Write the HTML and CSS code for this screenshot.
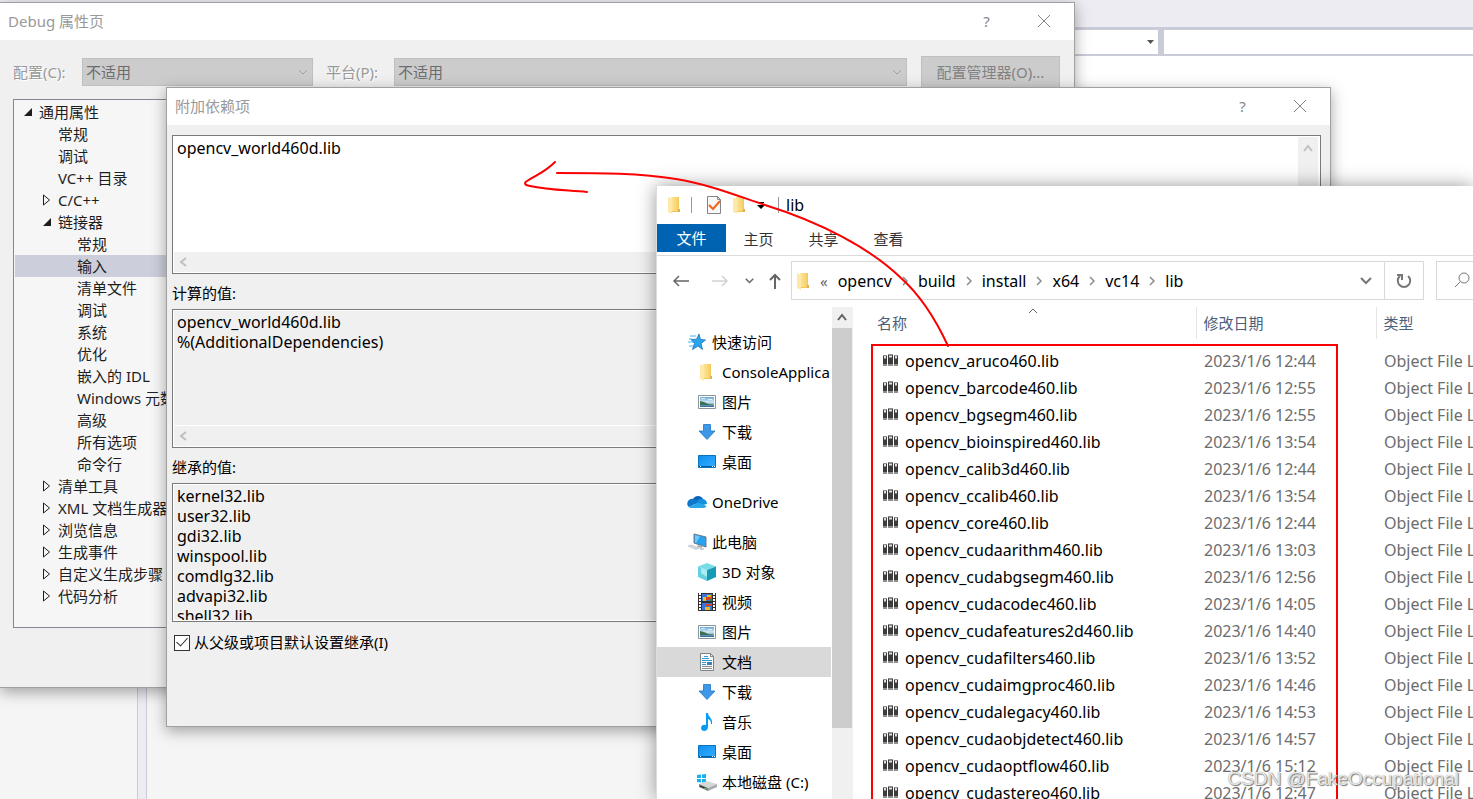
FILE: index.html
```html
<!DOCTYPE html>
<html lang="zh-CN">
<head>
<meta charset="utf-8">
<title>Debug 属性页</title>
<link rel="stylesheet" href="styles.css">
</head>
<body>
<svg class="sprite" aria-hidden="true">
  <defs>
    <linearGradient id="gold" x1="0" x2="1"><stop offset="0" stop-color="#ffe79b"/><stop offset="1" stop-color="#f6cf68"/></linearGradient>
    <linearGradient id="sky" x1="0" y1="0" x2="1" y2="1"><stop offset="0" stop-color="#0c8ff0"/><stop offset="1" stop-color="#35adff"/></linearGradient>
    <linearGradient id="photo" x1="0" y1="0" x2="0" y2="1"><stop offset="0" stop-color="#69a9d8"/><stop offset=".5" stop-color="#d3e8f4"/><stop offset="1" stop-color="#27698f"/></linearGradient>
  </defs>
  <symbol id="i-folder" viewBox="0 0 18 18"><path fill="#f2c75c" d="M5 1h8v12h1v3H5z"/><path fill="url(#gold)" d="M5 1h7v14H5z"/><path fill="#ffe9a9" d="M2 1l4 2v15l-4-2z"/><path fill="#dfb050" d="M12 13h2v3h-2z"/></symbol>
  <symbol id="i-check" viewBox="0 0 18 18"><path fill="#f8f8f8" stroke="#858585" d="M2.500.5h10l3 3v14h-13z"/><path fill="none" stroke="#858585" d="M12.500.5v3h3"/><path fill="none" stroke="#f26419" stroke-width="2" d="M4 9l4 4 7-8"/></symbol>
  <symbol id="i-star" viewBox="0 0 18 18"><path fill="#2ba6ee" stroke="#1271b9" stroke-width=".8" d="M11 1l1.500 5.500 5 .5-4.500 3.500 1.500 6L10 13l-5.500 3.500L6.500 10.500 3 6.500l5.500-.3z"/><path stroke="#49b6f4" d="M2 3h6M1 6h3M0 9h5M1 13h4"/></symbol>
  <symbol id="i-picture" viewBox="0 0 18 18"><path fill="#fff" stroke="#8b949b" d="M.5 2.500h17v13H.5z"/><path fill="url(#photo)" d="M2 4h14v10H2z"/><path fill="#3c7052" d="M2 8l4 1 4 2 6 1H2z"/><path fill="#fff" opacity=".7" d="M3 5h4v1H3zM10 6h4v1h-4z"/></symbol>
  <symbol id="i-down" viewBox="0 0 18 18"><path fill="#3d99e8" stroke="#1f76c4" stroke-width=".8" d="M5.500 1.500h7V8H17l-8 8.500L1 8h4.500z"/></symbol>
  <symbol id="i-desktop" viewBox="0 0 18 18"><path fill="url(#sky)" stroke="#0872bd" d="M.5 2.500h17v12H.5z"/><path fill="#075c9c" d="M1 13h16v1H1z"/><path fill="#fff" d="M2 13h1v1H2zM14 13h1v1h-1zM16 13h1v1h-1z"/></symbol>
  <symbol id="i-cloud" viewBox="0 0 20 18"><path fill="#0a62b8" d="M6 6c2-4 8-4 10 0l-6 5-9-2c1-2 3-3 5-3z"/><path fill="#1490df" d="M15 6c3 0 5 2 5 5l-8 2-6-4c3-1 4-3 9-3z"/><path fill="#0f76cc" d="M4 6c3-1 5 1 8 3L2 14C-1 12 0 7 4 6z"/><path fill="#28a8ea" d="M2 14l9-4.500L19.500 13c-.5 1-1.500 2-3 2H4c-1 0-1.500-.5-2-1z"/></symbol>
  <symbol id="i-pc" viewBox="0 0 20 18"><path fill="#27a3ed" stroke="#6d7880" d="M7 1l12 3v10L7 10z"/><path fill="#75c7fb" d="M8 2l5 1.500L9 10l-1-.5z"/><path fill="#a5adb3" d="M11 12l4 1v2l-5-1z"/><path fill="#d7dade" stroke="#b3b8bd" stroke-width=".6" d="M1 13l3-1 8 3-3 1.500zM13 15l4 1-3 1z"/></symbol>
  <symbol id="i-cube" viewBox="0 0 18 18"><path fill="#78dce7" d="M0 3.500L9 0l9 3.500L9 7z"/><path fill="#66cfe0" d="M0 3.500L9 7v11l-9-4z"/><path fill="#159bb6" d="M18 3.500L9 7v11l9-4z"/><path fill="#a8edf2" d="M3 5L9 7v7l-6-4z"/></symbol>
  <symbol id="i-video" viewBox="0 0 18 18"><path fill="#33302d" d="M0 0h18v18H0z"/><path stroke="#fff" stroke-width="2" stroke-dasharray="2 1" d="M2 0v18M16 0v18"/><path fill="#3976da" d="M4 1h10v7H4zM4 10h10v7H4z"/><path fill="#e8bd23" d="M5 4h3v4H5zM9 2h4v3H9zM7 14h5v3H7z"/><path fill="#d3422f" d="M8 4h5v3H8zM8 11h5v2H8z"/><path fill="#2d8c49" d="M11 6h3v2h-3z"/></symbol>
  <symbol id="i-doc" viewBox="0 0 18 18"><path fill="#fafafa" stroke="#7e8388" d="M2.500.5h10l3 3v14h-13z"/><path fill="none" stroke="#7e8388" d="M12.500.5v3h3"/><path stroke="#329ad9" d="M4 5.500h7M4 7.500h10M6 3.500h4M4 9.500h4M4 11.500h4"/><path fill="#3b82b3" d="M9 9h5v3H9z"/><path stroke="#8b8f92" d="M4 13.500h10M4 15.500h10"/></symbol>
  <symbol id="i-music" viewBox="0 0 18 18"><path fill="#079cf1" d="M8 0h2c0 4 5 5 4 11h-1c0-3-1-4-3-5v8c0 5-7 5-7 1 0-3 3-4 5-3z"/></symbol>
  <symbol id="i-disk" viewBox="0 0 20 18"><path fill="#18b3ee" d="M0 2l4-.5V5H0zM5 1.500L9 1v4H5zM0 6h4v3.500L0 9zM5 6h4v4l-4-.5z"/><path fill="#d5d7d9" d="M2 11l8-3 10 3-9 4z"/><path fill="#777c7e" d="M2 11l9 4v3l-9-4z"/><path fill="#a7abad" d="M20 11l-9 4v3l9-4z"/><path fill="#222" d="M3 12.500l6 2.500v1L3 13.500z"/><path fill="#48cf48" d="M7 15h2v1H7z"/></symbol>
  <symbol id="i-lib" viewBox="0 0 15 13"><path fill="#8f8f8f" d="M0 1h4v11H0zM5 0h5v12H5zM11 1h4v11h-4z"/><path fill="#3c3c3c" d="M0 5h4v5H0zM5 4h5v6H5zM11 5h4v5h-4zM0 2h1v3H0zM3 2h1v3H3zM5 1h1v3H5zM9 1h1v3H9zM11 2h1v3h-1zM14 2h1v3h-1z"/><path fill="#dedede" d="M1 2h2v2H1zM6 2h3v1H6zM12 2h2v2h-2z"/></symbol>
  <symbol id="i-close" viewBox="0 0 12 12"><path fill="none" stroke="#858585" d="M0 0l12 12M12 0L0 12"/></symbol>
  <symbol id="i-left" viewBox="0 0 8 10"><path fill="none" stroke="#bfbfbf" stroke-width="2" d="M7 1L2 5l5 4"/></symbol>
  <symbol id="i-up" viewBox="0 0 10 8"><path fill="none" stroke="currentColor" stroke-width="2" d="M1 7l4-5 4 5"/></symbol>
  <symbol id="i-open" viewBox="0 0 10 10"><path fill="#1e1e1e" d="M9 1v8H1z"/></symbol>
  <symbol id="i-shut" viewBox="0 0 10 12"><path fill="none" stroke="#1e1e1e" d="M1.500 1v10l6-5z"/></symbol>
  <symbol id="i-sep" viewBox="0 0 6 10"><path fill="none" stroke="#8a8a8a" stroke-width="1.500" d="M1 1l4 4-4 4"/></symbol>
  <symbol id="i-chev" viewBox="0 0 12 8"><path fill="none" stroke="currentColor" stroke-width="2" d="M1 1l5 5 5-5"/></symbol>
</svg>

<main class="desktop">
  <section class="ide">
    <div class="ide-top"></div>
    <div class="ide-nav"><div class="ide-field"><svg width="7" height="4" viewBox="0 0 7 4"><path fill="#555" d="M0 0h7L3.500 4z"/></svg></div><div class="ide-field"></div></div>
    <div class="ide-main"><div class="ide-side"></div><div class="ide-split"></div><div class="ide-work"><div class="ide-editor"></div><div class="ide-output"></div></div></div>
  </section>

  <section class="window properties">
    <header class="titlebar"><h1>Debug 属性页</h1><button class="tb">?</button><button class="tb" aria-label="关闭"><svg width="12" height="12"><use href="#i-close"/></svg></button></header>
    <div class="config">
      <label for="cfg">配置(C):</label>
      <div class="combo narrow"><select id="cfg" disabled><option>不适用</option></select><svg width="10" height="6" viewBox="0 0 10 6"><path fill="none" stroke="#a0a0a0" d="M1 1l4 4 4-4"/></svg></div>
      <label class="second" for="plat">平台(P):</label>
      <div class="combo wide"><select id="plat" disabled><option>不适用</option></select><svg width="10" height="6" viewBox="0 0 10 6"><path fill="none" stroke="#a0a0a0" d="M1 1l4 4 4-4"/></svg></div>
      <button class="manager" disabled>配置管理器(O)...</button>
    </div>
    <ul class="tree">
      <li><svg><use href="#i-open"/></svg>通用属性</li>
      <li class="l1 leaf">常规</li>
      <li class="l1 leaf">调试</li>
      <li class="l1 leaf">VC++ 目录</li>
      <li class="l1"><svg><use href="#i-shut"/></svg>C/C++</li>
      <li class="l1"><svg><use href="#i-open"/></svg>链接器</li>
      <li class="l2 leaf">常规</li>
      <li class="l2 leaf selected">输入</li>
      <li class="l2 leaf">清单文件</li>
      <li class="l2 leaf">调试</li>
      <li class="l2 leaf">系统</li>
      <li class="l2 leaf">优化</li>
      <li class="l2 leaf">嵌入的 IDL</li>
      <li class="l2 leaf">Windows 元数</li>
      <li class="l2 leaf">高级</li>
      <li class="l2 leaf">所有选项</li>
      <li class="l2 leaf">命令行</li>
      <li class="l1"><svg><use href="#i-shut"/></svg>清单工具</li>
      <li class="l1"><svg><use href="#i-shut"/></svg>XML 文档生成器</li>
      <li class="l1"><svg><use href="#i-shut"/></svg>浏览信息</li>
      <li class="l1"><svg><use href="#i-shut"/></svg>生成事件</li>
      <li class="l1"><svg><use href="#i-shut"/></svg>自定义生成步骤</li>
      <li class="l1"><svg><use href="#i-shut"/></svg>代码分析</li>
    </ul>
  </section>

  <section class="window depends">
    <header class="titlebar"><h2>附加依赖项</h2><button class="tb">?</button><button class="tb" aria-label="关闭"><svg width="12" height="12"><use href="#i-close"/></svg></button></header>
    <div class="depends-body">
      <div class="box editable">
        <div class="box-row"><textarea aria-label="附加依赖项">opencv_world460d.lib</textarea><div class="vbar"><svg width="10" height="8"><use href="#i-up"/></svg></div></div>
        <div class="hbar"><svg width="8" height="10"><use href="#i-left"/></svg></div>
      </div>
      <label for="calc">计算的值:</label>
      <div class="box">
        <div class="box-row"><textarea id="calc" readonly>opencv_world460d.lib
%(AdditionalDependencies)</textarea></div>
        <div class="hbar"><svg width="8" height="10"><use href="#i-left"/></svg></div>
      </div>
      <label for="inherited">继承的值:</label>
      <div class="box">
        <div class="box-row"><textarea id="inherited" readonly>kernel32.lib
user32.lib
gdi32.lib
winspool.lib
comdlg32.lib
advapi32.lib
shell32.lib</textarea></div>
      </div>
      <label class="inherit"><input type="checkbox" checked>从父级或项目默认设置继承(I)</label>
    </div>
  </section>

  <section class="explorer">
    <header class="quick">
      <svg class="ic"><use href="#i-folder"/></svg><i></i><svg class="ic gap"><use href="#i-check"/></svg><svg class="ic"><use href="#i-folder"/></svg><svg class="drop" width="8" height="7" viewBox="0 0 8 7"><path d="M1 0h6v1H1zM0 3h8L4 7z"/></svg><i></i><span>lib</span>
    </header>
    <nav class="tabs"><button class="active">文件</button><button>主页</button><button>共享</button><button>查看</button></nav>
    <div class="address">
      <button aria-label="后退"><svg width="16" height="12" viewBox="0 0 16 12"><path fill="none" stroke="#666" stroke-width="1.500" d="M16 6H1M6 1L1 6l5 5"/></svg></button>
      <button class="fwd" aria-label="前进"><svg width="16" height="12" viewBox="0 0 16 12"><path fill="none" stroke="#d2d2d2" stroke-width="1.500" d="M0 6h15M10 1l5 5-5 5"/></svg></button>
      <button class="recent" aria-label="最近"><svg width="9" height="6"><use href="#i-chev"/></svg></button>
      <button aria-label="向上"><svg width="12" height="16" viewBox="0 0 12 16"><path fill="none" stroke="#666" stroke-width="2" d="M6 16V2M1 7l5-5 5 5"/></svg></button>
      <div class="path">
        <svg class="ic"><use href="#i-folder"/></svg><span class="more">«</span>
        <a href="#">opencv</a><svg class="sep"><use href="#i-sep"/></svg><a href="#">build</a><svg class="sep"><use href="#i-sep"/></svg><a href="#">install</a><svg class="sep"><use href="#i-sep"/></svg><a href="#">x64</a><svg class="sep"><use href="#i-sep"/></svg><a href="#">vc14</a><svg class="sep"><use href="#i-sep"/></svg><a href="#">lib</a>
        <button class="history" aria-label="历史"><svg width="12" height="8"><use href="#i-chev"/></svg></button>
        <button class="refresh" aria-label="刷新"><svg width="16" height="16" viewBox="0 0 16 16"><path fill="none" stroke="#777" stroke-width="2" d="M4 3a6.200 6.200 0 1 0 8 0"/><path fill="none" stroke="#777" stroke-width="2" d="M1 2h5v5"/></svg></button>
      </div>
      <button class="search" aria-label="搜索"><svg width="18" height="18" viewBox="0 0 18 18"><circle cx="11" cy="6" r="5" fill="none" stroke="#777"/><path stroke="#777" d="M7.500 9.500L2 15"/></svg></button>
    </div>
    <div class="panes">
      <ul class="places">
        <li class="root"><svg class="ic"><use href="#i-star"/></svg>快速访问</li>
        <li><svg class="ic"><use href="#i-folder"/></svg>ConsoleApplica</li>
        <li><svg class="ic"><use href="#i-picture"/></svg>图片</li>
        <li><svg class="ic"><use href="#i-down"/></svg>下载</li>
        <li><svg class="ic"><use href="#i-desktop"/></svg>桌面</li>
        <li class="root spaced"><svg class="ic big"><use href="#i-cloud"/></svg>OneDrive</li>
        <li class="root spaced"><svg class="ic big"><use href="#i-pc"/></svg>此电脑</li>
        <li><svg class="ic"><use href="#i-cube"/></svg>3D 对象</li>
        <li><svg class="ic"><use href="#i-video"/></svg>视频</li>
        <li><svg class="ic"><use href="#i-picture"/></svg>图片</li>
        <li class="selected"><svg class="ic"><use href="#i-doc"/></svg>文档</li>
        <li><svg class="ic"><use href="#i-down"/></svg>下载</li>
        <li><svg class="ic"><use href="#i-music"/></svg>音乐</li>
        <li><svg class="ic"><use href="#i-desktop"/></svg>桌面</li>
        <li><svg class="ic big"><use href="#i-disk"/></svg>本地磁盘 (C:)</li>
      </ul>
      <div class="scroll"><svg width="10" height="8"><use href="#i-up"/></svg><div class="thumb"></div></div>
      <div class="listing">
        <svg class="sort" width="10" height="6" viewBox="0 0 10 6"><path fill="none" stroke="#666" d="M1 5l4-4 4 4"/></svg>
        <table>
          <colgroup><col class="c-name"><col class="c-date"><col></colgroup>
          <thead><tr><th>名称</th><th>修改日期</th><th>类型</th></tr></thead>
          <tbody>
            <tr><td><svg><use href="#i-lib"/></svg>opencv_aruco460.lib</td><td>2023/1/6 12:44</td><td>Object File L</td></tr>
            <tr><td><svg><use href="#i-lib"/></svg>opencv_barcode460.lib</td><td>2023/1/6 12:55</td><td>Object File L</td></tr>
            <tr><td><svg><use href="#i-lib"/></svg>opencv_bgsegm460.lib</td><td>2023/1/6 12:55</td><td>Object File L</td></tr>
            <tr><td><svg><use href="#i-lib"/></svg>opencv_bioinspired460.lib</td><td>2023/1/6 13:54</td><td>Object File L</td></tr>
            <tr><td><svg><use href="#i-lib"/></svg>opencv_calib3d460.lib</td><td>2023/1/6 12:44</td><td>Object File L</td></tr>
            <tr><td><svg><use href="#i-lib"/></svg>opencv_ccalib460.lib</td><td>2023/1/6 13:54</td><td>Object File L</td></tr>
            <tr><td><svg><use href="#i-lib"/></svg>opencv_core460.lib</td><td>2023/1/6 12:44</td><td>Object File L</td></tr>
            <tr><td><svg><use href="#i-lib"/></svg>opencv_cudaarithm460.lib</td><td>2023/1/6 13:03</td><td>Object File L</td></tr>
            <tr><td><svg><use href="#i-lib"/></svg>opencv_cudabgsegm460.lib</td><td>2023/1/6 12:56</td><td>Object File L</td></tr>
            <tr><td><svg><use href="#i-lib"/></svg>opencv_cudacodec460.lib</td><td>2023/1/6 14:05</td><td>Object File L</td></tr>
            <tr><td><svg><use href="#i-lib"/></svg>opencv_cudafeatures2d460.lib</td><td>2023/1/6 14:40</td><td>Object File L</td></tr>
            <tr><td><svg><use href="#i-lib"/></svg>opencv_cudafilters460.lib</td><td>2023/1/6 13:52</td><td>Object File L</td></tr>
            <tr><td><svg><use href="#i-lib"/></svg>opencv_cudaimgproc460.lib</td><td>2023/1/6 14:46</td><td>Object File L</td></tr>
            <tr><td><svg><use href="#i-lib"/></svg>opencv_cudalegacy460.lib</td><td>2023/1/6 14:53</td><td>Object File L</td></tr>
            <tr><td><svg><use href="#i-lib"/></svg>opencv_cudaobjdetect460.lib</td><td>2023/1/6 14:57</td><td>Object File L</td></tr>
            <tr><td><svg><use href="#i-lib"/></svg>opencv_cudaoptflow460.lib</td><td>2023/1/6 15:12</td><td>Object File L</td></tr>
            <tr><td><svg><use href="#i-lib"/></svg>opencv_cudastereo460.lib</td><td>2023/1/6 12:47</td><td>Object File L</td></tr>
          </tbody>
        </table>
      </div>
    </div>
  </section>

  <svg class="marks" width="1473" height="820" viewBox="0 0 1473 820" aria-hidden="true">
    <g fill="none" stroke="#fb0000" stroke-width="2" stroke-linecap="round">
      <path d="M872 820V345h465v475"/>
      <path d="M948 346C936 320 920 295 901 278C870 248 820 222 765 205C735 195 707 184 676 179C640 173 600 173 557 173"/>
      <path d="M555 162C545 172 540 173 527 181C524 183 524 185 530 186C548 190 565 190 587 192"/>
    </g>
  </svg>
  <div class="watermark">CSDN @FakeOccupational</div>
</main>
</body>
</html>
```
FILE: styles.css
```css
* { box-sizing: border-box; }

body {
  margin: 0;
  font: 15px/20px "Noto Sans", "Noto Sans CJK SC", sans-serif;
  color: #000;
}

button, select, textarea, input { font: inherit; color: inherit; }
button { border: 0; background: none; padding: 0; }
ul { list-style: none; margin: 0; padding: 0; }
svg { flex: none; display: block; }
a { color: inherit; text-decoration: none; }
.sprite { position: absolute; width: 0; height: 0; }

.desktop { position: relative; height: 100vh; overflow: hidden; background: #fff; }

.ide { height: 100%; display: flex; flex-direction: column; }
.ide-top { height: 27px; background: #edecf2; }
.ide-nav { display: grid; grid-template-columns: 1fr 309px; gap: 6px; padding: 3px 0 2px; background: #cacbd9; }
.ide-field { height: 24px; background: #fff; display: flex; align-items: center; justify-content: flex-end; padding-right: 4px; }
.ide-main { flex: 1; display: flex; }
.ide-side { width: 137px; background: #f5f5f5; }
.ide-split { width: 10px; background: #edecf2; border: solid #cacbd9; border-width: 0 1px; }
.ide-work { flex: 1; display: flex; flex-direction: column; }
.ide-editor { flex: 1; }
.ide-output { height: 180px; background: #f5f5f5; }

.window { position: absolute; background: #f0f0f0; border: 1px solid #a0a0a0; box-shadow: 0 4px 14px rgba(0, 0, 0, .35); }
.titlebar { display: flex; align-items: center; height: 37px; padding: 0 2px 2px 0; background: #fff; color: #999; }
.titlebar h1, .titlebar h2 { flex: 1; margin: 0; padding-left: 8px; font-size: 15px; font-weight: 400; }
.tb { width: 57px; height: 35px; display: grid; place-items: center; color: #858585; }

.properties { left: 0; right: 398px; top: 2px; border-left: 0; padding-bottom: 59px; }
.config { display: flex; align-items: center; padding: 16px 14px 11px 13px; }
.config label { width: 69px; color: #999; text-shadow: 1px 1px #fff; }
.config .second { width: 68px; margin-left: 13px; }
.combo { position: relative; }
.narrow { flex: 231; }
.wide { flex: 513; margin-right: 14px; }
.combo select { appearance: none; display: block; width: 100%; height: 28px; border: 1px solid #bfbfbf; border-radius: 0; background: #ccc; color: #6d6d6d; opacity: 1; padding: 0 3px; }
.combo svg { position: absolute; right: 5px; top: 11px; }
.manager { width: 139px; height: 32px; background: #ccc; border: 1px solid #bfbfbf; color: #838383; }

.tree { margin-left: 13px; width: 300px; padding: 1px 1px 20px; background: #f6f6f6; border: 1px solid #828790; color: #1e1e1e; }
.tree li { display: flex; align-items: center; gap: 6px; height: 22px; padding-left: 8px; }
.tree svg { width: 10px; height: 12px; }
.tree .l1 { padding-left: 27px; }
.tree .l2 { padding-left: 46px; }
.tree .l1.leaf { padding-left: 43px; }
.tree .l2.leaf { padding-left: 62px; }
.tree .selected { background: #cccedb; }

.depends { left: 166px; right: 142px; top: 87px; }
.depends-body { display: flex; flex-direction: column; padding: 10px 9px 73px 5px; }
.depends-body > label { margin: 9px 0 5px; line-height: 21px; }
.box { height: 139px; border: 1px solid #7a7a7a; outline: 1px solid #fff; outline-offset: -2px; display: flex; flex-direction: column; padding: 1px; }
.editable { background: #fff; }
.box-row { flex: 1; display: flex; min-height: 0; }
.box textarea { flex: 1; resize: none; border: 0; outline: 0; background: transparent; padding: 1px 3px 0; overflow: hidden; font-size: 16px; line-height: 20px; white-space: pre; }
.vbar { width: 20px; background: #f0f0f0; color: #bfbfbf; display: flex; justify-content: center; padding-top: 7px; margin-right: 1px; }
.hbar { height: 21px; display: flex; align-items: center; padding-left: 5px; background: #f0f0f0; border-top: 1px solid #fff; }
.depends-body .inherit { display: flex; align-items: center; gap: 4px; margin: 10px 0 0 2px; }
.inherit input { appearance: none; width: 16px; height: 16px; margin: 0; border: 1px solid #333; background: #fff; display: grid; place-items: center; }
.inherit input::after { content: ""; width: 5px; height: 10px; margin-top: -4px; border: solid #333; border-width: 0 1px 1px 0; transform: rotate(42deg); }

.explorer { position: absolute; left: 656px; right: 0; top: 186px; bottom: 0; display: flex; flex-direction: column; background: #fff; border-left: 1px solid #ddd; box-shadow: 0 0 18px rgba(0, 0, 0, .4); overflow: hidden; }
.ic { width: 18px; height: 18px; }
.quick { display: flex; align-items: center; height: 38px; padding-left: 9px; flex: none; }
.quick i { width: 1px; height: 16px; background: #999; margin: 0 7px; }
.quick .gap { margin: 0 8px 0 6px; }
.quick .drop { margin: 0 6px 0 8px; }
.quick span { font-size: 16px; }
.tabs { display: flex; height: 32px; border-bottom: 1px solid #dadbdc; flex: none; color: #333; }
.tabs button { width: 65px; height: 30px; }
.tabs .active { width: 69px; height: 28px; background: #0063b1; color: #fff; }
.address { display: flex; align-items: center; padding: 5px 0 7px 15px; flex: none; color: #666; }
.address > button { width: 17px; display: grid; place-items: center; }
.address .fwd { margin: 0 13px 0 22px; }
.address .recent { margin-right: 8px; }
.path { flex: 1; display: flex; align-items: center; height: 39px; margin-left: 8px; border: 1px solid #d9d9d9; color: #000; padding-left: 3px; }
.path a { font-size: 16px; }
.path .more { margin: 0 10px 0 7px; color: #666; }
.path .sep { width: 6px; height: 10px; margin: 0 10px; }
.path .history { margin-left: auto; margin-right: 12px; color: #777; }
.path .refresh { align-self: stretch; width: 39px; border-left: 1px solid #d9d9d9; display: grid; place-items: center; }
.address .search { width: 37px; height: 39px; margin-left: 12px; border: 1px solid #d9d9d9; border-right: 0; padding-left: 14px; }

.panes { flex: 1; display: flex; min-height: 0; }
.places { width: 174px; padding-top: 20px; overflow: hidden; flex: none; }
.places li { display: flex; align-items: center; gap: 6px; height: 30px; padding-left: 41px; white-space: nowrap; }
.places .root { padding-left: 31px; }
.places .spaced { margin-top: 10px; }
.places .big { width: 20px; margin: 0 -1px; }
.places .selected { background: #d9d9d9; }
.scroll { width: 20px; margin-left: 1px; background: #f0f0f0; display: flex; flex-direction: column; align-items: center; gap: 7px; padding-top: 6px; color: #606060; }
.thumb { width: 20px; height: 400px; background: #cdcdcd; }
.listing { position: relative; flex: 1; border-left: 1px solid #f0f0f0; overflow: hidden; }
.sort { position: absolute; left: 175px; top: 1px; }
.listing table { width: 100%; table-layout: fixed; border-collapse: collapse; white-space: nowrap; color: #6d6d6d; }
.c-name { width: 343px; }
.c-date { width: 180px; }
.listing th { height: 32px; padding: 0 0 0 7px; border-left: 1px solid #e5e5e5; text-align: left; font-weight: 400; color: #4c607a; }
.listing th:first-child { border-left: 0; padding-left: 24px; }
.listing td { height: 27px; padding: 0 0 0 8px; overflow: hidden; font-size: 16px; }
.listing td:first-child { padding-left: 30px; color: #000; }
.listing td svg { display: inline-block; width: 15px; height: 13px; margin-right: 7px; }
.listing tbody::before { content: ""; display: block; height: 8px; }

.marks { position: absolute; left: 0; top: 0; }
.watermark { position: absolute; right: 14px; bottom: 8px; font: 19px/24px "Liberation Sans", sans-serif; color: rgba(255, 255, 255, .8); text-shadow: 1px 1px 1px #777, 0 0 1px #888; }
```
